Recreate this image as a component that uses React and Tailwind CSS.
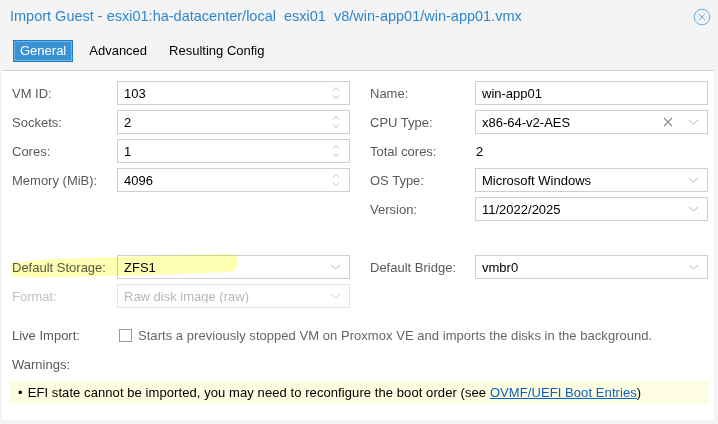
import React from "react";

const Spinner = () => (
  <svg width="10" height="18" viewBox="0 0 10 18" className="shrink-0">
    <path d="M2 6.5 L5 3.5 L8 6.5" fill="none" stroke="#bdbdbd" strokeWidth="1" />
    <path d="M2 11.5 L5 14.5 L8 11.5" fill="none" stroke="#bdbdbd" strokeWidth="1" />
  </svg>
);

const Chevron = ({ color = "#b5b5b5" }) => (
  <svg width="11" height="8" viewBox="0 0 11 8" className="shrink-0">
    <path d="M1 2 L5.5 6 L10 2" fill="none" stroke={color} strokeWidth="1" />
  </svg>
);

const Clear = () => (
  <svg width="10" height="10" viewBox="0 0 10 10" className="shrink-0">
    <path d="M1 1 L9 9 M9 1 L1 9" fill="none" stroke="#8a8a8a" strokeWidth="1.1" />
  </svg>
);

function Field({ value, kind, disabled }) {
  return (
    <div
      className={
        "w-[233px] h-[24px] border flex items-center pl-[6px] pr-[8px] " +
        (disabled ? "border-[#e3e3e3] text-[#b8b8b8]" : "border-[#cfcfcf] text-black")
      }
    >
      <span className="flex-1 truncate">{value}</span>
      {kind === "spin" && <Spinner />}
      {kind === "combo" && <Chevron color={disabled ? "#d8d8d8" : "#b5b5b5"} />}
      {kind === "clear" && (
        <div className="flex items-center gap-[15px]">
          <Clear />
          <Chevron />
        </div>
      )}
    </div>
  );
}

function Row({ label, children, disabled }) {
  return (
    <div className="flex items-center h-[24px]">
      <div className={"w-[105px] " + (disabled ? "text-[#c2c2c2]" : "text-[#5a5a5a]")}>{label}</div>
      {children}
    </div>
  );
}

export default function App() {
  return (
    <div className="w-[718px] h-[424px] bg-[#f4f4f4] relative overflow-hidden font-['Liberation_Sans',Arial,sans-serif] text-[13px] leading-none">
      {/* Header */}
      <div className="flex items-center justify-between h-[33px] pl-[10px] pr-[7px]">
        <div className="text-[14.5px] text-[#2f86cf] whitespace-pre">
          Import Guest - esxi01:ha-datacenter/local  esxi01  v8/win-app01/win-app01.vmx
        </div>
        <svg width="18" height="18" viewBox="0 0 18 18" className="shrink-0">
          <circle cx="9" cy="9" r="7.8" fill="none" stroke="#6aaee4" strokeWidth="1" />
          <path d="M5.8 5.8 L12.2 12.2 M12.2 5.8 L5.8 12.2" stroke="#6aaee4" strokeWidth="1" />
        </svg>
      </div>
      {/* Tabs */}
      <div className="flex items-center h-[37px] pl-[13px] pb-[2px]">
        <div className="h-[22px] px-[6px] flex items-center bg-[#3892d4] border border-[#1f7dc4] text-white shadow-[inset_0_0_0_1px_#6fb2e3]">
          General
        </div>
        <div className="ml-[16px] text-black">Advanced</div>
        <div className="ml-[22px] text-black">Resulting Config</div>
      </div>
      {/* Body */}
      <div className="absolute left-[2px] right-[4px] top-[70px] bottom-[4px] bg-white border-t border-[#d0d0d0] pl-[10px] pr-[6px] pt-[10px]">
        <div className="flex gap-[20px]">
          <div className="flex flex-col gap-[5px]">
            <Row label="VM ID:"><Field value="103" kind="spin" /></Row>
            <Row label="Sockets:"><Field value="2" kind="spin" /></Row>
            <Row label="Cores:"><Field value="1" kind="spin" /></Row>
            <Row label="Memory (MiB):"><Field value="4096" kind="spin" /></Row>
          </div>
          <div className="flex flex-col gap-[5px]">
            <Row label="Name:"><Field value="win-app01" /></Row>
            <Row label="CPU Type:"><Field value="x86-64-v2-AES" kind="clear" /></Row>
            <Row label="Total cores:"><div className="pl-[1px] text-black">2</div></Row>
            <Row label="OS Type:"><Field value="Microsoft Windows" kind="combo" /></Row>
            <Row label="Version:"><Field value="11/2022/2025" kind="combo" /></Row>
          </div>
        </div>
        <div className="flex gap-[20px] mt-[34px]">
          <div className="flex flex-col gap-[5px]">
            <Row label="Default Storage:"><Field value="ZFS1" kind="combo" /></Row>
            <Row label="Format:" disabled><Field value="Raw disk image (raw)" kind="combo" disabled /></Row>
          </div>
          <div className="flex flex-col gap-[5px]">
            <Row label="Default Bridge:"><Field value="vmbr0" kind="combo" /></Row>
          </div>
        </div>
        <div className="flex items-center h-[24px] mt-[15px]">
          <div className="w-[107px] text-[#5a5a5a]">Live Import:</div>
          <div className="w-[13px] h-[13px] border border-[#9a9a9a] bg-white"></div>
          <div className="ml-[6px] text-[#666] tracking-[0.04px]">
            Starts a previously stopped VM on Proxmox VE and imports the disks in the background.
          </div>
        </div>
        <div className="flex items-center h-[24px] mt-[5px] text-[#5a5a5a]">Warnings:</div>
        <div className="mt-[5px] ml-[-3px] w-[699px] h-[23px] bg-[#fdfde1] flex items-center pl-[9px] text-black tracking-[0.08px]">
          <span className="mr-[5px]">•</span>
          EFI state cannot be imported, you may need to reconfigure the boot order (see&nbsp;
          <span className="text-[#0a5fc4] underline">OVMF/UEFI Boot Entries</span>)
        </div>
      </div>
      {/* Highlighter stroke */}
      <svg
        className="absolute left-0 top-0 pointer-events-none mix-blend-multiply"
        width="718"
        height="424"
        viewBox="0 0 718 424"
      >
        <path
          d="M11 263 Q40 259 80 258 L150 256 L228 254 Q240 254 238 262 Q237 270 230 272 L150 275 L60 277 Q30 278 12 276 Z"
          fill="#ffffa0"
          opacity="0.8"
        />
      </svg>
    </div>
  );
}
